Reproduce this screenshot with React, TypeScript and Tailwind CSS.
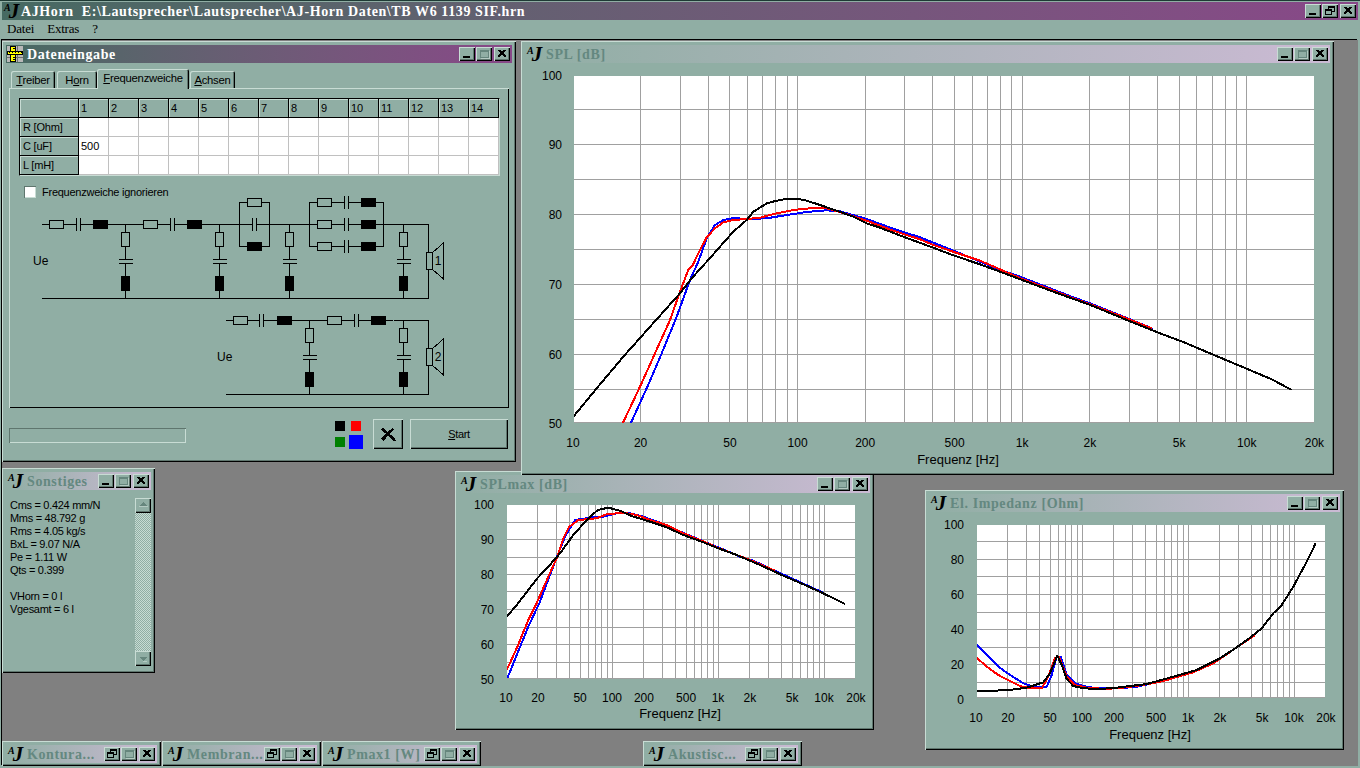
import React from "react";

const FACE = "#90aea4";

const raised = "shadow-[inset_1px_1px_0_#c8dcd4,inset_-1px_-1px_0_#000,inset_-2px_-2px_0_#5f766e]";
const sunken = "shadow-[inset_1px_1px_0_#5f766e,inset_-1px_-1px_0_#c8dcd4]";
const frame = "shadow-[inset_1px_1px_0_#c8dcd4,inset_-1px_-1px_0_#000,inset_-2px_-2px_0_#5f766e]";

function Logo() {
  return (
    <span className="flex w-[17px] h-[18px] items-start text-black font-['Liberation_Serif',serif] font-bold italic select-none">
      <span className="text-[10px] leading-[12px]">A</span>
      <span className="text-[21px] leading-[18px] -ml-[2px]">J</span>
    </span>
  );
}

function RulerIcon() {
  return (
    <svg width="16" height="16" viewBox="0 0 16 16" shapeRendering="crispEdges" className="mr-[4px] ml-[1px] shrink-0">
      <rect width="16" height="16" fill="#b8b8b8" />
      <path d="M10.500 0v16M0 11.500h16" stroke="#707070" />
      <rect x="3.500" y="0.500" width="5" height="5" fill="#ffff00" stroke="#000" />
      <rect x="0.500" y="5.500" width="15" height="3" fill="#ffff00" stroke="#000" />
      <rect x="3.500" y="8.500" width="5" height="7" fill="#ffff00" stroke="#000" />
      <path d="M2.500 6v1M5.500 6v1M8.500 6v1M11.500 6v1M14.500 6v1M6 2.500h2M6 11.500h2M6 13.500h2" stroke="#000" />
    </svg>
  );
}

function TitleButton({ kind }: { kind: "min" | "max" | "restore" | "close" }) {
  return (
    <span className={`block w-[16px] h-[14px] shrink-0 bg-[#90aea4] ${raised} ${kind === "close" ? "ml-[2px]" : "ml-[1px]"}`}>
      <svg width="16" height="14" viewBox="0 0 16 14" shapeRendering="crispEdges">
        {kind === "min" && <rect x="4" y="9" width="7" height="2" fill="#000" />}
        {kind === "max" && (
          <>
            <path d="M4.500 3.500h8v7h-8zM4.500 4.500h8" fill="none" stroke="#66867d" />
            <path d="M13.500 4v7.500H5" fill="none" stroke="#b4cac2" />
          </>
        )}
        {kind === "restore" && (
          <path d="M6.500 5V2.500h6v5H10M6.500 3.500h6M3.500 5.500h6v5h-6zM3.500 6.500h6" fill="none" stroke="#000" />
        )}
        {kind === "close" && (
          <path d="M4 2.500h2l2 2 2-2h2v1l-2.500 2.500 2.500 2.500v1h-2l-2-2-2 2H4v-1l2.500-2.500L4 3.500z" fill="#000" />
        )}
      </svg>
    </span>
  );
}

function TitleBar({
  title,
  active = false,
  icon,
  buttons,
}: {
  title: string;
  active?: boolean;
  icon?: React.ReactNode;
  buttons: ("min" | "max" | "restore" | "close")[];
}) {
  return (
    <div
      className={`flex items-center h-[18px] shrink-0 bg-linear-to-r ${
        active ? "from-[#466a62] to-[#884888]" : "from-[#90aea4] to-[#cbbad4]"
      }`}
    >
      {icon ?? (
        <span className="ml-[2px] mr-[2px] shrink-0">
          <Logo />
        </span>
      )}
      <span
        className={`font-['Liberation_Serif',serif] font-bold text-[14px] tracking-[0.6px] whitespace-pre ${
          active ? "text-white" : "text-[#648880]"
        }`}
      >
        {title}
      </span>
      <span className="ml-auto mr-[2px] flex">
        {buttons.map((b, i) => (
          <TitleButton key={i} kind={b} />
        ))}
      </span>
    </div>
  );
}

function Window({
  className,
  title,
  active,
  icon,
  buttons = ["min", "max", "close"],
  children,
}: {
  className: string;
  title: string;
  active?: boolean;
  icon?: React.ReactNode;
  buttons?: ("min" | "max" | "restore" | "close")[];
  children?: React.ReactNode;
}) {
  return (
    <div className={`absolute flex flex-col p-[4px] bg-[#90aea4] ${frame} ${className}`}>
      <TitleBar title={title} active={active} icon={icon} buttons={buttons} />
      {children}
    </div>
  );
}

// chart ---------------------------------------------------------------

const FREQS = [20, 30, 40, 50, 60, 70, 80, 90, 100, 200, 300, 400, 500, 600, 700, 800, 900, 1000, 2000, 3000, 4000, 5000, 6000, 7000, 8000, 9000, 10000];
const X_LABELS: [string, number][] = [
  ["10", 10], ["20", 20], ["50", 50], ["100", 100], ["200", 200], ["500", 500],
  ["1k", 1000], ["2k", 2000], ["5k", 5000], ["10k", 10000], ["20k", 20000],
];

type Curve = { color: string; points: string };

function Chart({
  view,
  plot,
  base,
  decade,
  rows,
  yLabels,
  yLabelRight,
  xLabelY,
  xTitle,
  curves,
}: {
  view: [number, number, number, number];
  plot: [number, number, number, number];
  base: number;
  decade: number;
  rows: number[];
  yLabels: [string, number][];
  yLabelRight: number;
  xLabelY: number;
  xTitle: [number, number];
  curves: Curve[];
}) {
  const [l, t, r, b] = plot;
  const fx = (f: number) => base + decade * Math.log10(f / 10);
  return (
    <svg
      width={view[2]}
      height={view[3]}
      viewBox={view.join(" ")}
      className="block font-['Liberation_Sans',sans-serif]"
    >
      <rect x={l} y={t} width={r - l} height={b - t} fill="#fff" />
      <g stroke="#a0a0a0" shapeRendering="crispEdges">
        {FREQS.map((f) => {
          const x = Math.floor(fx(f)) + 0.5;
          return <line key={f} x1={x} x2={x} y1={t} y2={b} />;
        })}
        {rows.map((y) => (
          <line key={y} x1={l} x2={r} y1={y + 0.5} y2={y + 0.5} />
        ))}
        <line x1={l} x2={r} y1={b - 0.5} y2={b - 0.5} />
      </g>
      <svg x={l} y={t} width={r - l} height={b - t} viewBox={`${l} ${t} ${r - l} ${b - t}`}>
        {curves.map((c) => (
          <polyline key={c.color} points={c.points} fill="none" stroke={c.color} strokeWidth="2" strokeLinejoin="round" shapeRendering="crispEdges" />
        ))}
      </svg>
      {yLabels.map(([s, y]) => (
        <text key={s} x={yLabelRight} y={y + 4} textAnchor="end" fontSize="12" fill="#000">
          {s}
        </text>
      ))}
      {X_LABELS.map(([s, f]) => (
        <text key={s} x={fx(f)} y={xLabelY + 4} textAnchor="middle" fontSize="12" fill="#000">
          {s}
        </text>
      ))}
      <text x={xTitle[0]} y={xTitle[1] + 4} textAnchor="middle" fontSize="13" fill="#000">
        Frequenz [Hz]
      </text>
    </svg>
  );
}

// points read off a 3x crop, so divide back down to page pixels
const trace = (s: string, ox: number, oy: number) =>
  s
    .trim()
    .split(/\s+/)
    .map((p) => {
      const [a, b] = p.split(",").map(Number);
      return `${(ox + a / 3).toFixed(1)},${(oy + b / 3).toFixed(1)}`;
    })
    .join(" ");

const SPL_CURVES: Curve[] = [
  {
    color: "#0000ff",
    points:
      "630.7,423.3 646.7,388.3 661.7,353.3 676.7,316.7 690,280 698.3,261.7 706.7,238.3 715,225 723.3,220 733.3,218 746.7,219 766.7,218.3 786.7,215 806.7,212 826.7,210.3 840,211.3 866.7,219 893.3,228.7 920,237.3 960,253.3 1000,270 1020,276.7 1073.3,297.3 1090,303.3 1130,319.3 1153.3,329",
  },
  {
    color: "#ff0000",
    points:
      "622.7,423.3 640,386.7 655,353.3 670,320 680,291.7 688.3,270 692.7,265 700,250 706.7,237.3 715,228.3 723.3,222.3 733.3,220 746.7,219 760,217.7 776.7,213.3 793.3,210 813.3,208 826.7,208.3 840,212 866.7,220.7 893.3,230.7 920,239.3 933.3,245 980,260.7 1022.3,279 1050,289.3 1073.3,298.3 1090.3,304.3 1129.3,319.3 1151.7,328.3",
  },
  {
    color: "#000000",
    points:
      "573.3,416.7 596.7,388.3 623.3,356.7 656.7,319.3 680,293.3 691.7,278.3 706.7,261.7 720,246.7 733.3,231.7 746.7,220 753,212 766.7,203.3 776.7,200.7 786.7,198.7 796.7,198.7 806.7,200.7 820,205 836.7,210.7 853.3,216.7 866.7,223.3 880,227.7 903.3,236.7 933.3,247.7 954.3,255.7 980,264.3 1022.3,280 1053.3,291.7 1090.3,305 1129.3,321 1157.3,332.3 1183.3,342 1212.3,354.3 1247.3,369 1271.7,379.3 1291.7,390",
  },
];

const MAX_CURVES: Curve[] = [
  {
    color: "#0000ff",
    points: trace(
      "172,625 200,555 235,470 270,395 300,315 325,250 345,200 375,150 420,143 460,140 500,130 540,130 580,140 630,158 680,180 720,197 770,218 820,238 870,260 910,272 965,298 1120,368",
      450,
      470,
    ),
  },
  {
    color: "#ff0000",
    points: trace(
      "170,600 200,535 235,450 262,395 295,320 320,265 340,205 358,170 385,150 440,145 470,133 520,128 560,135 600,150 650,165 700,190 750,210 800,232 860,255 900,270 975,302",
      450,
      470,
    ),
  },
  {
    color: "#000000",
    points: trace(
      "170,440 200,405 235,360 262,325 295,290 330,250 370,195 410,150 443,120 475,113 510,122 545,138 600,155 650,172 700,195 750,213 800,233 860,255 930,285 1000,317 1070,347 1130,375 1185,402",
      450,
      470,
    ),
  },
];

const IMP_CURVES: Curve[] = [
  {
    color: "#0000ff",
    points: trace(
      "170,478 200,510 235,545 270,570 310,595 340,605 380,605 395,570 410,515 422,515 440,570 465,595 490,603 530,610 600,610 650,605 710,592",
      920,
      485,
    ),
  },
  {
    color: "#ff0000",
    points: trace(
      "170,518 200,545 235,570 270,588 300,603 330,610 365,610 385,575 405,520 417,515 440,575 465,600 500,608 560,612 620,607 680,598 730,588 820,562 880,535 1005,450",
      920,
      485,
    ),
  },
  {
    color: "#000000",
    points: trace(
      "170,618 260,616 320,608 370,592 390,565 412,512 425,540 440,582 460,603 490,610 540,612 600,607 680,597 760,575 830,555 900,520 950,487 985,462 1025,430 1060,385 1085,360 1120,305 1160,230 1187,175",
      920,
      485,
    ),
  },
];

// circuit -------------------------------------------------------------

function Res({ x, y, w, h }: { x: number; y: number; w: number; h: number }) {
  return <rect x={x + 0.5} y={y + 0.5} width={w - 1} height={h - 1} fill={FACE} stroke="#000" />;
}

function Series({ r, c, l, y }: { r?: number; c?: number; l?: number; y: number }) {
  return (
    <>
      {r !== undefined && <Res x={r} y={y - 4} w={15} h={9} />}
      {c !== undefined && (
        <>
          <rect x={c} y={y - 1} width={5} height={3} fill={FACE} />
          <path d={`M${c + 0.5} ${y - 6}v13M${c + 4.5} ${y - 6}v13`} stroke="#000" fill="none" />
        </>
      )}
      {l !== undefined && <rect x={l} y={y - 4} width={15} height={9} fill="#000" />}
    </>
  );
}

function Shunt({ x, top, bottom }: { x: number; top: number; bottom: number }) {
  return (
    <>
      <path d={`M${x + 0.5} ${top}V${bottom}`} stroke="#000" fill="none" />
      <Res x={x - 4} y={top + 8} w={9} h={15} />
      <rect x={x - 6} y={top + 35} width={13} height={5} fill={FACE} />
      <path d={`M${x - 6} ${top + 35.5}h14M${x - 6} ${top + 39.5}h14`} stroke="#000" fill="none" />
      <rect x={x - 4} y={top + 52} width={9} height={15} fill="#000" />
    </>
  );
}

function Speaker({ y, n }: { y: number; n: string }) {
  return (
    <>
      <Res x={426} y={y} w={7} h={18} />
      <path d={`M432.5 ${y + 0.5}L443.5 ${y - 9}V${y + 27}L432.5 ${y + 17.5}`} fill="none" stroke="#000" />
      <text x={438} y={y + 13} textAnchor="middle" fontSize="12" fill="#000">
        {n}
      </text>
    </>
  );
}

function Circuit() {
  return (
    <svg width="498" height="212" viewBox="10 196 498 212" shapeRendering="crispEdges" className="block -mt-[2px] font-['Liberation_Sans',sans-serif]">
      <path d="M42 224.500H429M42 298.500H429M428.500 224V299" stroke="#000" fill="none" />
      <Series r={49} c={76} l={93} y={224} />
      <Series r={143} c={170} l={187} y={224} />
      <Shunt x={125} top={224} bottom={298} />
      <Shunt x={219} top={224} bottom={298} />
      <Shunt x={289} top={224} bottom={298} />
      <Shunt x={403} top={224} bottom={298} />
      {/* parallel branch 1 */}
      <path d="M239.500 202.500H269.500V246.500H239.500Z" stroke="#000" fill="none" />
      <Series r={247} y={202} />
      <Series c={252} y={224} />
      <Series l={247} y={246} />
      {/* parallel branch 2 */}
      <path d="M309.500 202.500H383.500V246.500H309.500ZM309 224.500H384" stroke="#000" fill="none" />
      <Series r={317} c={344} l={361} y={202} />
      <Series r={317} c={344} l={361} y={224} />
      <Series r={317} c={344} l={361} y={246} />
      <Speaker y={252} n="1" />
      <text x={33} y={265} fontSize="12" fill="#000">Ue</text>

      <path d="M226 320.500H393M394 320.500H429M226 394.500H429M428.500 320V395" stroke="#000" fill="none" />
      <Series r={233} c={259} l={277} y={320} />
      <Series r={327} c={354} l={371} y={320} />
      <Shunt x={309} top={320} bottom={394} />
      <Shunt x={403} top={320} bottom={394} />
      <Speaker y={348} n="2" />
      <text x={217} y={361} fontSize="12" fill="#000">Ue</text>
    </svg>
  );
}

// Dateneingabe --------------------------------------------------------

function Tab({ active, className, children }: { active?: boolean; className: string; children: React.ReactNode }) {
  return (
    <div
      className={`flex items-center justify-center text-[11.3px] tracking-[-0.25px] rounded-t-[2px] bg-[#90aea4] shadow-[inset_1px_1px_0_#c8dcd4,inset_-1px_0_0_#000,inset_-2px_0_0_#5f766e] ${
        active ? "relative z-10 h-[20px] -mb-[1px] pb-[2px]" : "h-[17px] pt-[1px]"
      } ${className}`}
    >
      <span>{children}</span>
    </div>
  );
}

function ParamGrid() {
  const head = `flex items-center pl-[2px] bg-[#90aea4] border-r border-b border-black shadow-[inset_1px_1px_0_#c8dcd4]`;
  const cell = "flex items-center pl-[2px] bg-white border-r border-b border-[#c0c0c0]";
  const cols = Array.from({ length: 14 }, (_, i) => i + 1);
  return (
    <div className="grid grid-cols-[59px_repeat(14,30px)] grid-rows-[19px_19px_19px_19px] w-[481px] text-[11px] border-t border-l border-black border-r-[#c8dcd4] border-b-[#c8dcd4] border-r border-b">
      <div className={head} />
      {cols.map((c) => (
        <div key={c} className={head}>{c}</div>
      ))}
      {["R [Ohm]", "C [uF]", "L [mH]"].map((label) => (
        <React.Fragment key={label}>
          <div className={`${head} tracking-[-0.2px] pl-[3px]`}>{label}</div>
          {cols.map((c) => (
            <div key={c} className={cell}>{label === "C [uF]" && c === 1 ? "500" : ""}</div>
          ))}
        </React.Fragment>
      ))}
    </div>
  );
}

function ScrollButton({ up }: { up?: boolean }) {
  return (
    <span className={`block w-[16px] h-[15px] shrink-0 bg-[#90aea4] ${raised}`}>
      <svg width="16" height="15" viewBox="0 0 16 15" shapeRendering="crispEdges">
        <path d={up ? "M8 4l4 4H4z" : "M4 6h8l-4 4z"} fill="#66867d" />
        <path d={up ? "M4 8.500h9" : "M8 10.500h4"} stroke="#b4cac2" />
      </svg>
    </span>
  );
}

export default function App() {
  return (
    <div className="h-screen w-screen overflow-hidden flex flex-col p-[2px] bg-[#90aea4] text-black shadow-[inset_0_1px_0_#1e3a34] font-['Liberation_Sans',sans-serif]">
      {/* application title + menu */}
      <div className="h-[17px] shrink-0">
        <TitleBar
          title={"AJHorn  E:\\Lautsprecher\\Lautsprecher\\AJ-Horn Daten\\TB W6 1139 SIF.hrn"}
          active
          icon={
            <span className="ml-[2px] shrink-0">
              <Logo />
            </span>
          }
          buttons={["min", "restore", "close"]}
        />
      </div>
      <div className="flex items-center h-[21px] shrink-0 pl-[5px] pb-[2px] gap-[13px] font-['Liberation_Serif',serif] text-[13px] tracking-[-0.2px]">
        <span>Datei</span>
        <span>Extras</span>
        <span>?</span>
      </div>

      {/* MDI client */}
      <div className="relative flex-1 bg-[#808080] shadow-[-1px_-1px_0_#000]">
        <Window
          className="left-0 top-[1px] w-[514px] h-[421px]"
          title="Dateneingabe"
          active
          icon={<RulerIcon />}
        >
          <div className="flex items-end h-[19px] mt-[6px] ml-[5px]">
            <Tab className="w-[44px]"><u>T</u>reiber</Tab>
            <Tab className="w-[40px] ml-[2px]">H<u>o</u>rn</Tab>
            <Tab active className="w-[92px]"><u>F</u>requenzweiche</Tab>
            <Tab className="w-[45px] ml-[1px]"><u>A</u>chsen</Tab>
          </div>
          <div className="ml-[3px] w-[500px] h-[320px] flex flex-col pl-[10px] pt-[10px] overflow-hidden shadow-[inset_1px_1px_0_#c8dcd4,inset_-1px_-1px_0_#000]">
            <ParamGrid />
            <div className="flex items-center gap-[6px] h-[12px] mt-[10px] ml-[5px] text-[11px] tracking-[-0.25px]">
              <span className="block w-[12px] h-[12px] bg-white shadow-[inset_1px_1px_0_#5f766e,inset_-1px_-1px_0_#c8dcd4]" />
              <span>Frequenzweiche ignorieren</span>
            </div>
            <div className="-ml-[9px]">
              <Circuit />
            </div>
          </div>
          <div className="flex items-center h-[30px] mt-[11px] ml-[3px]">
            <div className={`w-[177px] h-[15px] mt-[2px] ${sunken}`} />
            <div className="ml-[149px] w-[28px] flex flex-col">
              <div className="flex gap-[6px] mt-[2px]">
                <span className="block w-[10px] h-[10px] bg-black" />
                <span className="block w-[10px] h-[10px] bg-[#ff0000]" />
              </div>
              <div className="flex items-center gap-[4px] mt-[4px]">
                <span className="block w-[10px] h-[10px] bg-[#008000]" />
                <span className="block w-[14px] h-[14px] bg-[#0000ff]" />
              </div>
            </div>
            <div className={`ml-[10px] w-[30px] h-[30px] ${raised}`}>
              <svg width="30" height="30" viewBox="0 0 30 30" shapeRendering="crispEdges">
                <path d="M9 9.500l12.500 11.500M20.500 9.500L10 19.500" stroke="#000" strokeWidth="2.600" fill="none" />
                <path d="M8 19l4-2 1 2-3 3zM21 21h2v1h-2z" fill="#000" />
              </svg>
            </div>
            <div className={`ml-[7px] w-[98px] h-[30px] flex items-center justify-center text-[11px] tracking-[-0.3px] ${raised}`}>
              <span><u>S</u>tart</span>
            </div>
          </div>
        </Window>

        <Window className="left-[453px] top-[431px] w-[419px] h-[259px]" title="SPLmax [dB]">
          <Chart
            view={[459, 493, 411, 233]}
            plot={[507, 505, 855, 679]}
            base={506}
            decade={106}
            rows={[522, 539, 557, 574, 591, 609, 627, 644, 662]}
            yLabels={[["100", 505], ["90", 540], ["80", 575], ["70", 610], ["60", 645], ["50", 680]]}
            yLabelRight={494}
            xLabelY={698}
            xTitle={[680, 714]}
            curves={MAX_CURVES}
          />
        </Window>

        <Window className="left-[519px] top-[1px] w-[813px] h-[434px]" title="SPL [dB]">
          <Chart
            view={[525, 63, 805, 408]}
            plot={[574, 76, 1314, 423]}
            base={573}
            decade={224.6}
            rows={[109, 144, 179, 214, 249, 284, 319, 354, 389]}
            yLabels={[["100", 76], ["90", 145], ["80", 215], ["70", 285], ["60", 355], ["50", 424]]}
            yLabelRight={562}
            xLabelY={443}
            xTitle={[958, 460]}
            curves={SPL_CURVES}
          />
        </Window>

        <Window className="left-[923px] top-[450px] w-[419px] h-[260px]" title="El. Impedanz [Ohm]">
          <Chart
            view={[929, 512, 411, 234]}
            plot={[977, 525, 1325, 698]}
            base={976}
            decade={106}
            rows={[541, 559, 576, 594, 612, 629, 647, 664, 682]}
            yLabels={[["100", 525], ["80", 560], ["60", 595], ["40", 630], ["20", 665], ["0", 700]]}
            yLabelRight={964}
            xLabelY={718}
            xTitle={[1150, 735]}
            curves={IMP_CURVES}
          />
        </Window>

        <Window className="left-0 top-[428px] w-[153px] h-[205px]" title="Sonstiges">
          <div className="flex justify-between mt-[8px]">
            <div className="pl-[4px] pt-[1px] text-[11px] leading-[13px] tracking-[-0.3px]">
              <div>Cms = 0.424 mm/N</div>
              <div>Mms = 48.792 g</div>
              <div>Rms = 4.05 kg/s</div>
              <div>BxL = 9.07 N/A</div>
              <div>Pe = 1.11 W</div>
              <div>Qts = 0.399</div>
              <div className="h-[13px]" />
              <div>VHorn = 0 l</div>
              <div>Vgesamt = 6 l</div>
            </div>
            <div className="flex flex-col w-[16px] h-[168px]">
              <ScrollButton up />
              <div className="flex-1 bg-[repeating-conic-gradient(#c8dcd4_0_25%,#90aea4_0_50%)] bg-[length:2px_2px]" />
              <ScrollButton />
            </div>
          </div>
        </Window>

        <Window className="left-0 top-[701px] w-[159px] h-[25px]" title="Kontura..." buttons={["restore", "max", "close"]} />
        <Window className="left-[160px] top-[701px] w-[159px] h-[25px]" title="Membran..." buttons={["restore", "max", "close"]} />
        <Window className="left-[320px] top-[701px] w-[159px] h-[25px]" title="Pmax1 [W]" buttons={["restore", "max", "close"]} />
        <Window className="left-[641px] top-[701px] w-[159px] h-[25px]" title="Akustisc..." buttons={["restore", "max", "close"]} />
      </div>
    </div>
  );
}
